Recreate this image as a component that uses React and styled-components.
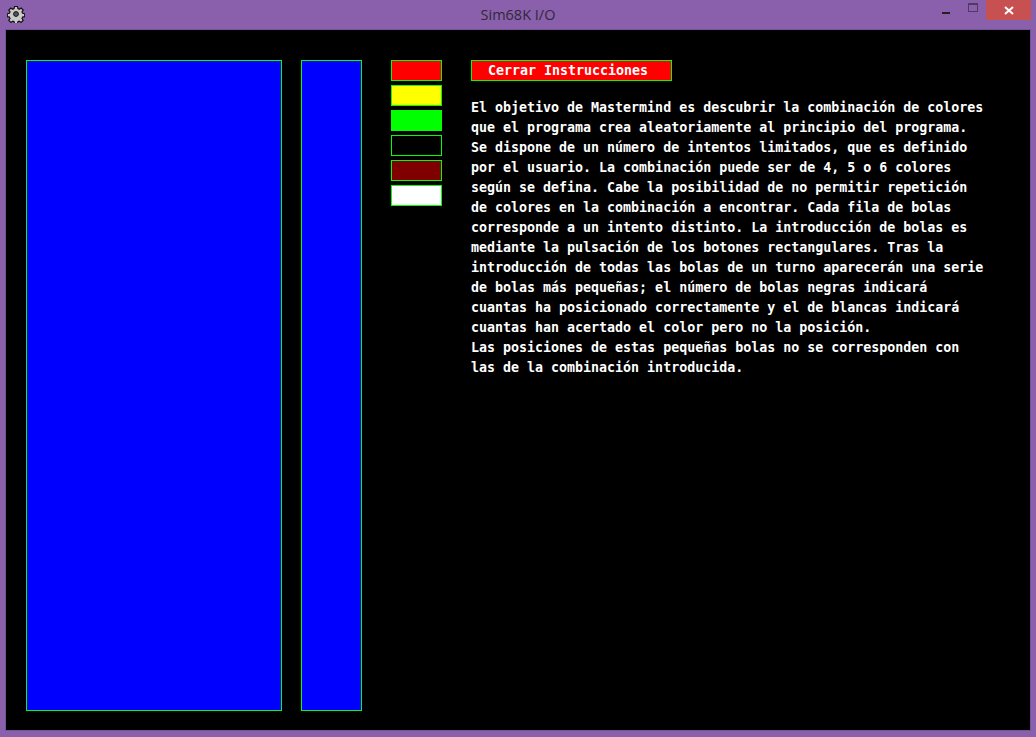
import React from 'react';
import styled, { createGlobalStyle } from 'styled-components';

const GlobalStyle = createGlobalStyle`
  html, body {
    margin: 0;
    padding: 0;
    background: #8a5fab;
  }
`;

const Window = styled.div`
  width: 1036px;
  height: 737px;
  background-color: #8a5fab;
  display: flex;
  flex-direction: column;
  overflow: hidden;
`;

const TitleBar = styled.div`
  height: 30px;
  display: flex;
  align-items: flex-start;
`;

const AppIcon = styled.div`
  width: 18px;
  height: 18px;
  margin: 5px 0 0 7px;
`;

const Title = styled.div`
  flex: 1;
  text-align: center;
  font-family: "Open Sans", "Liberation Sans", sans-serif;
  font-size: 14.5px;
  color: #2e2a3a;
  padding-top: 5px;
  padding-left: 78px;
`;

const Controls = styled.div`
  display: flex;
  align-items: flex-start;
  margin-right: 5px;
`;

const CtrlButton = styled.div`
  width: ${(p) => p.w}px;
  height: 20px;
  display: flex;
  align-items: center;
  justify-content: center;
  background: ${(p) => p.bg || 'transparent'};
`;

const MinGlyph = styled.div`
  width: 8px;
  height: 2px;
  background: #222;
  margin-top: 6px;
`;

const MaxGlyph = styled.div`
  width: 8px;
  height: 6px;
  border: 1px solid #4c3c63;
  border-top-width: 2px;
  margin-bottom: 5px;
`;

const Client = styled.div`
  width: 1024px;
  height: 700px;
  margin-left: 6px;
  background: #000;
  box-sizing: border-box;
  padding: 30px 0 0 20px;
  display: flex;
  align-items: flex-start;
  outline: 1px solid #7a5498;
`;

const Panel = styled.div`
  width: ${(p) => p.w}px;
  height: 651px;
  box-sizing: border-box;
  background: #0000ff;
  border: 1px solid #00ff00;
  margin-right: ${(p) => p.gap}px;
  flex-shrink: 0;
`;

const Palette = styled.div`
  display: flex;
  flex-direction: column;
  gap: 4px;
  margin-right: 29px;
`;

const Swatch = styled.div`
  width: 51px;
  height: 21px;
  box-sizing: border-box;
  background: ${(p) => p.color};
  border: 1px solid #00ff00;
`;

const Instructions = styled.div`
  display: flex;
  flex-direction: column;
  font-family: "DejaVu Sans Mono", "Liberation Mono", monospace;
  font-weight: bold;
  font-size: 13.3px;
  color: #fff;
`;

const CloseButton = styled.div`
  width: 201px;
  height: 21px;
  box-sizing: border-box;
  background: #ff0000;
  border: 1px solid #00ff00;
  padding-left: 16px;
  line-height: 19px;
  white-space: pre;
`;

const Text = styled.div`
  margin-top: 17px;
  line-height: 20px;
  white-space: pre;
`;

const lines = [
  'El objetivo de Mastermind es descubrir la combinación de colores',
  'que el programa crea aleatoriamente al principio del programa.',
  'Se dispone de un número de intentos limitados, que es definido',
  'por el usuario. La combinación puede ser de 4, 5 o 6 colores',
  'según se defina. Cabe la posibilidad de no permitir repetición',
  'de colores en la combinación a encontrar. Cada fila de bolas',
  'corresponde a un intento distinto. La introducción de bolas es',
  'mediante la pulsación de los botones rectangulares. Tras la',
  'introducción de todas las bolas de un turno aparecerán una serie',
  'de bolas más pequeñas; el número de bolas negras indicará',
  'cuantas ha posicionado correctamente y el de blancas indicará',
  'cuantas han acertado el color pero no la posición.',
  'Las posiciones de estas pequeñas bolas no se corresponden con',
  'las de la combinación introducida.',
];

const colors = ['#ff0000', '#ffff00', '#00ff00', '#000000', '#800000', '#ffffff'];

const Gear = () => (
  <svg width="18" height="18" viewBox="0 0 18 18">
    <path
      d="M7.5 1.5h3l.4 2.1 1.4.6 1.8-1.2 2.1 2.1-1.2 1.8.6 1.4 2.1.4v3l-2.1.4-.6 1.4 1.2 1.8-2.1 2.1-1.8-1.2-1.4.6-.4 2.1h-3l-.4-2.1-1.4-.6-1.8 1.2-2.1-2.1 1.2-1.8-.6-1.4-2.1-.4v-3l2.1-.4.6-1.4-1.2-1.8 2.1-2.1 1.8 1.2 1.4-.6z"
      fill="#c9c9c9"
      stroke="#111"
      strokeWidth="1.2"
    />
    <circle cx="9" cy="9" r="2.4" fill="#555" stroke="#111" strokeWidth="1" />
  </svg>
);

const App = () => {
  return (
    <Window>
      <GlobalStyle />
      <TitleBar>
        <AppIcon>
          <Gear />
        </AppIcon>
        <Title>Sim68K I/O</Title>
        <Controls>
          <CtrlButton w={26}>
            <MinGlyph />
          </CtrlButton>
          <CtrlButton w={27}>
            <MaxGlyph />
          </CtrlButton>
          <CtrlButton w={45} bg="#c75050">
            <svg width="10" height="9" viewBox="0 0 10 9">
              <path d="M1 1l8 7M9 1l-8 7" stroke="#fff" strokeWidth="2" />
            </svg>
          </CtrlButton>
        </Controls>
      </TitleBar>
      <Client>
        <Panel w={256} gap={19} />
        <Panel w={61} gap={29} />
        <Palette>
          {colors.map((c) => (
            <Swatch key={c} color={c} />
          ))}
        </Palette>
        <Instructions>
          <CloseButton>Cerrar Instrucciones</CloseButton>
          <Text>{lines.join('\n')}</Text>
        </Instructions>
      </Client>
    </Window>
  );
};

export default App;
